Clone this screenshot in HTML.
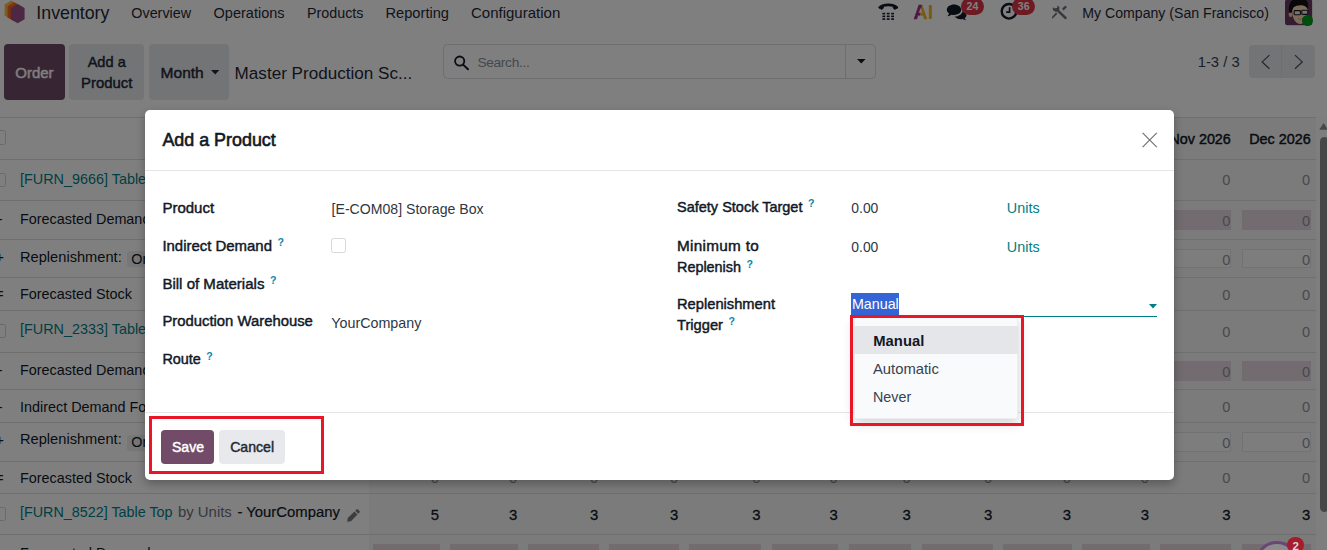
<!DOCTYPE html>
<html lang="en"><head><meta charset="utf-8"><title>Odoo - Master Production Schedule</title>
<style>
html,body{margin:0;padding:0;}
body{width:1327px;height:550px;overflow:hidden;background:#fff;font-family:"Liberation Sans", sans-serif;position:relative;}
.t{position:absolute;white-space:nowrap;line-height:1;}
.b{position:absolute;box-sizing:border-box;}
svg{position:absolute;overflow:visible;}
#app,#ov,#dlg,#fl{position:absolute;left:0;top:0;width:1327px;height:550px;overflow:hidden;}
#ov{background:rgba(0,0,0,.5);}
sup.q{color:#0b86ad;font-size:10.6px;font-weight:700;-webkit-text-stroke:0;position:relative;top:1.2px;margin-left:5.5px;vertical-align:super;line-height:0;}
</style></head><body>

<div id="app">
<svg style="left:0;top:0" width="30" height="26" viewBox="0 0 30 26">
<polygon points="11.2,0.6 17.9,4.4 17.9,15.6 11.2,19.4 4.6,15.6 4.6,4.4" fill="#fbb945"/>
<polygon points="14.2,2.2 21.2,6.2 21.2,17.4 14.2,21.3 7.6,17.4 7.6,6.2" fill="#f4661b"/>
<polygon points="17.6,4.0 24.6,8.0 24.6,19.2 17.6,23.2 10.8,19.2 10.8,8.0" fill="#985184"/>
</svg>
<div class="t" style="top:4.73px;font-size:17.8px;font-weight:400;color:#1f2937;left:36.30px;">Inventory</div>
<div class="t" style="top:5.75px;font-size:14.35px;font-weight:400;color:#1f2937;left:131.30px;">Overview</div>
<div class="t" style="top:5.63px;font-size:14.5px;font-weight:400;color:#1f2937;left:213.60px;">Operations</div>
<div class="t" style="top:5.80px;font-size:14.3px;font-weight:400;color:#1f2937;left:307.00px;">Products</div>
<div class="t" style="top:5.50px;font-size:14.65px;font-weight:400;color:#1f2937;left:385.50px;">Reporting</div>
<div class="t" style="top:5.20px;font-size:15.0px;font-weight:400;color:#1f2937;left:471.00px;">Configuration</div>
<svg style="left:876px;top:0" width="26" height="24" viewBox="876 0 26 24"><path d="M879.8 7.4 C883.5 3.9 893.1 3.9 896.8 7.4" fill="none" stroke="#111827" stroke-width="2.7" stroke-linecap="round"/><path d="M878.5 7.3 l3.2 2.7 l2.4 -2.2 l-1.8 -2.4z M898.1 7.3 l-3.2 2.7 l-2.4 -2.2 l1.8 -2.4z" fill="#111827"/><rect x="882.4" y="12.80" width="2.8" height="1.6" fill="#111827"/><rect x="882.4" y="15.55" width="2.8" height="1.6" fill="#111827"/><rect x="882.4" y="18.30" width="2.8" height="1.6" fill="#111827"/><rect x="886.8" y="12.80" width="2.8" height="1.6" fill="#111827"/><rect x="886.8" y="15.55" width="2.8" height="1.6" fill="#111827"/><rect x="886.8" y="18.30" width="2.8" height="1.6" fill="#111827"/><rect x="891.2" y="12.80" width="2.8" height="1.6" fill="#111827"/><rect x="891.2" y="15.55" width="2.8" height="1.6" fill="#111827"/><rect x="891.2" y="18.30" width="2.8" height="1.6" fill="#111827"/></svg>
<div class="t" style="left:913.4px;top:3.1px;font-size:19.4px;font-weight:700;"><span style="display:inline-block;transform:scaleX(1.0);transform-origin:left center;margin-right:0.4px;background:linear-gradient(100deg,#a02c8c 0%,#a02c8c 50%,#f5b02e 54%,#f5b02e 100%);-webkit-background-clip:text;background-clip:text;color:transparent;-webkit-text-stroke:0.5px rgba(160,44,140,.0);">A</span><span style="color:#f5b02e">I</span></div>
<svg style="left:944px;top:0" width="26" height="24" viewBox="944 0 26 24"><path d="M954 4.6c-4 0-7.2 2.3-7.2 5.2 0 1.5.9 2.8 2.3 3.8-.3 1-1 1.9-1.9 2.6 1.7-.1 3.2-.7 4.3-1.5.8.2 1.6.3 2.5.3 4 0 7.2-2.3 7.2-5.2S958 4.6 954 4.6z" fill="#111827"/><path d="M962.6 11.2c-.5 2.9-3.8 5.2-8 5.4 1.2 1.6 3.5 2.6 6 2.6.7 0 1.400-.1 2-.2 1 .7 2.300 1.200 3.700 1.300-.8-.6-1.300-1.400-1.600-2.200 1.100-.8 1.800-1.900 1.800-3.100 0-1.600-1.500-3.000-3.900-3.800z" fill="#111827"/></svg>
<div class="b" style="left:960.70px;top:-2.50px;width:23.60px;height:17.50px;background:#dc3545;border-radius:9px;"></div>
<div class="t" style="top:0.93px;font-size:10.6px;font-weight:700;color:#fff;left:772.50px;width:400px;text-align:center;">24</div>
<svg style="left:998px;top:0" width="24" height="24" viewBox="998 0 24 24"><circle cx="1009" cy="11.3" r="7.3" fill="none" stroke="#111827" stroke-width="2.4"/><path d="M1009.6 7.2v5h-3.400" fill="none" stroke="#111827" stroke-width="1.7"/></svg>
<div class="b" style="left:1012.00px;top:-2.50px;width:23.40px;height:17.50px;background:#dc3545;border-radius:9px;"></div>
<div class="t" style="top:0.93px;font-size:10.6px;font-weight:700;color:#fff;left:823.70px;width:400px;text-align:center;">36</div>
<svg style="left:1048px;top:0" width="24" height="24" viewBox="1048 0 24 24"><path d="M1056.2 9.2 L1065.6 18.0" stroke="#6d727a" stroke-width="2.4" stroke-linecap="round" fill="none"/><path d="M1053.0 7.2 a3.3 3.3 0 1 0 4.6 -1.8 l-0.4 2.6 l-2.2 0.5z" fill="#6d727a"/><path d="M1062.0 8.8 L1065.3 5.6 L1066.9 7.2 L1063.6 10.4z" fill="#6d727a"/><path d="M1057.4 13.8 L1052.2 18.9 L1052.0 16.9 L1056.0 12.5z" fill="#6d727a"/></svg>
<div class="t" style="top:6.35px;font-size:14.12px;font-weight:400;color:#1f2937;left:1082.30px;">My Company (San Francisco)</div>
<svg style="left:1285.2px;top:-1px" width="27.4" height="26.4" viewBox="0 0 27.4 26.4"><defs><clipPath id="avc"><rect x="0" y="0" width="27.4" height="26.4" rx="3.2"/></clipPath></defs><g clip-path="url(#avc)"><rect width="27.4" height="26.4" fill="#6b3a62"/><path d="M7.5 5 C6 18 9.5 24.500 15 25 C20 25 23.500 19 22.800 5z" fill="#fbd5b3"/><ellipse cx="5.6" cy="15.4" rx="1.9" ry="2.6" fill="#f0c29c"/><path d="M4.2 13.5 C2.5 5 6.500 -1 14 -1 C21 -1 24.500 2.500 22.900 10.500 C21.500 7.500 20 6.500 17 6.200 C13 6.000 10.500 7.000 8.600 8.200 C7.400 10 7.000 12 6.600 14z" fill="#111"/><rect x="9.2" y="11.6" width="6.2" height="4.2" rx="0.6" fill="#e8e8e8" stroke="#1a1a1a" stroke-width="1.1"/><rect x="16.8" y="11.2" width="6" height="4.2" rx="0.6" fill="#e8e8e8" stroke="#1a1a1a" stroke-width="1.1"/><path d="M13 19.300 q2.500 1.800 5.200 0.200" fill="#fff" stroke="#7a4a3a" stroke-width="0.5"/></g></svg>
<div class="b" style="left:1302.0px;top:15.0px;width:11.4px;height:11.4px;border-radius:50%;background:#009a1a;"></div>
<div class="b" style="left:4.00px;top:44.00px;width:61.00px;height:56.00px;background:#714B67;border-radius:4px;"></div>
<div class="t" style="top:65.10px;font-size:15.0px;font-weight:400;color:#fff;-webkit-text-stroke:0.45px #fff;left:-165.60px;width:400px;text-align:center;">Order</div>
<div class="b" style="left:69.00px;top:44.00px;width:75.00px;height:56.00px;background:#e7e9ed;border-radius:4px;"></div>
<div class="t" style="top:54.84px;font-size:14.6px;font-weight:400;color:#1f2937;-webkit-text-stroke:0.45px #1f2937;left:-93.30px;width:400px;text-align:center;">Add a</div>
<div class="t" style="top:76.29px;font-size:14.9px;font-weight:400;color:#1f2937;-webkit-text-stroke:0.45px #1f2937;left:-93.30px;width:400px;text-align:center;">Product</div>
<div class="b" style="left:149.00px;top:44.00px;width:79.60px;height:56.00px;background:#e7e9ed;border-radius:4px;"></div>
<div class="t" style="top:64.68px;font-size:15.5px;font-weight:400;color:#1f2937;-webkit-text-stroke:0.45px #1f2937;left:160.60px;">Month</div>
<svg style="left:210.5px;top:70.2px" width="8.4" height="4.6" viewBox="0 0 8.4 4.6"><path d="M0 0h8.4L4.200 4.600z" fill="#1f2937"/></svg>
<div class="t" style="top:65.22px;font-size:17.1px;font-weight:400;color:#1f2937;left:234.60px;">Master Production Sc...</div>
<div class="b" style="left:443.00px;top:44.00px;width:433.40px;height:35.00px;background:#fff;border:1px solid #d9dce1;border-radius:4.5px;"></div>
<div class="b" style="left:845.00px;top:45.00px;width:1.00px;height:33.00px;background:#d9dce1;"></div>
<svg style="left:452px;top:53px" width="20" height="20" viewBox="452 53 20 20"><circle cx="459.7" cy="61.1" r="4.6" fill="none" stroke="#111827" stroke-width="1.8"/><path d="M463.100 64.600L468 69.300" stroke="#111827" stroke-width="2.0" stroke-linecap="round"/></svg>
<div class="t" style="top:56.00px;font-size:13.7px;font-weight:400;color:#8790a0;letter-spacing:-0.3px;left:477.40px;">Search...</div>
<svg style="left:856.5px;top:58.9px" width="8.6" height="4.6" viewBox="0 0 8.6 4.6"><path d="M0 0h8.6L4.300 4.600z" fill="#111827"/></svg>
<div class="t" style="top:54.97px;font-size:14.8px;font-weight:400;color:#374151;right:87.40px;">1-3 / 3</div>
<div class="b" style="left:1249.00px;top:44.70px;width:65.60px;height:33.10px;background:#e7e9ed;border-radius:4px;"></div>
<div class="b" style="left:1281.20px;top:44.70px;width:1.00px;height:33.10px;background:#dcdfe4;"></div>
<svg style="left:1249px;top:44.700px" width="66" height="33" viewBox="1249 44.700 66 33"><path d="M1269.4 54.8L1262.2 61.600L1269.4 68.400" fill="none" stroke="#4b5563" stroke-width="1.3"/><path d="M1295.0 54.800L1302.2 61.600L1295.0 68.400" fill="none" stroke="#4b5563" stroke-width="1.300"/></svg>
<div class="b" style="left:368.70px;top:117.50px;width:947.30px;height:432.50px;background:#f7f7f7;"></div>
<div class="b" style="left:0.00px;top:117.00px;width:1316.00px;height:1.00px;background:#dedfe1;"></div>
<div class="b" style="left:-8.50px;top:130.40px;width:14.70px;height:14.20px;background:#fff;border:1px solid #cfd3d9;border-radius:2.5px;"></div>
<div class="t" style="top:132.15px;font-size:14.35px;font-weight:400;color:#111827;-webkit-text-stroke:0.45px #111827;right:887.80px;">Jan 2026</div>
<div class="t" style="top:132.15px;font-size:14.35px;font-weight:400;color:#111827;-webkit-text-stroke:0.45px #111827;right:809.50px;">Feb 2026</div>
<div class="t" style="top:132.15px;font-size:14.35px;font-weight:400;color:#111827;-webkit-text-stroke:0.45px #111827;right:728.40px;">Mar 2026</div>
<div class="t" style="top:132.15px;font-size:14.35px;font-weight:400;color:#111827;-webkit-text-stroke:0.45px #111827;right:648.40px;">Apr 2026</div>
<div class="t" style="top:132.15px;font-size:14.35px;font-weight:400;color:#111827;-webkit-text-stroke:0.45px #111827;right:566.30px;">May 2026</div>
<div class="t" style="top:132.15px;font-size:14.35px;font-weight:400;color:#111827;-webkit-text-stroke:0.45px #111827;right:489.00px;">Jun 2026</div>
<div class="t" style="top:132.15px;font-size:14.35px;font-weight:400;color:#111827;-webkit-text-stroke:0.45px #111827;right:416.10px;">Jul 2026</div>
<div class="t" style="top:132.15px;font-size:14.35px;font-weight:400;color:#111827;-webkit-text-stroke:0.45px #111827;right:334.40px;">Aug 2026</div>
<div class="t" style="top:132.15px;font-size:14.35px;font-weight:400;color:#111827;-webkit-text-stroke:0.45px #111827;right:255.70px;">Sep 2026</div>
<div class="t" style="top:132.15px;font-size:14.35px;font-weight:400;color:#111827;-webkit-text-stroke:0.45px #111827;right:177.70px;">Oct 2026</div>
<div class="t" style="top:132.15px;font-size:14.35px;font-weight:400;color:#111827;-webkit-text-stroke:0.45px #111827;right:96.20px;">Nov 2026</div>
<div class="t" style="top:132.15px;font-size:14.35px;font-weight:400;color:#111827;-webkit-text-stroke:0.45px #111827;right:16.40px;">Dec 2026</div>
<div class="b" style="left:0.00px;top:158.90px;width:1316.00px;height:1.00px;background:#dedfe1;"></div>
<div class="b" style="left:-8.50px;top:172.60px;width:14.70px;height:14.20px;background:#fff;border:1px solid #cfd3d9;border-radius:2.5px;"></div>
<div class="t" style="top:171.81px;font-size:14.4px;font-weight:400;color:#017e84;left:20.00px;">[FURN_9666] Table Leg by Units - YourCompany</div>
<div class="t" style="top:173.24px;font-size:14.6px;font-weight:400;color:#8d94a0;right:888.20px;">0</div>
<div class="t" style="top:173.24px;font-size:14.6px;font-weight:400;color:#8d94a0;right:809.90px;">0</div>
<div class="t" style="top:173.24px;font-size:14.6px;font-weight:400;color:#8d94a0;right:728.80px;">0</div>
<div class="t" style="top:173.24px;font-size:14.6px;font-weight:400;color:#8d94a0;right:648.80px;">0</div>
<div class="t" style="top:173.24px;font-size:14.6px;font-weight:400;color:#8d94a0;right:566.70px;">0</div>
<div class="t" style="top:173.24px;font-size:14.6px;font-weight:400;color:#8d94a0;right:489.40px;">0</div>
<div class="t" style="top:173.24px;font-size:14.6px;font-weight:400;color:#8d94a0;right:416.50px;">0</div>
<div class="t" style="top:173.24px;font-size:14.6px;font-weight:400;color:#8d94a0;right:334.80px;">0</div>
<div class="t" style="top:173.24px;font-size:14.6px;font-weight:400;color:#8d94a0;right:256.10px;">0</div>
<div class="t" style="top:173.24px;font-size:14.6px;font-weight:400;color:#8d94a0;right:178.10px;">0</div>
<div class="t" style="top:173.24px;font-size:14.6px;font-weight:400;color:#8d94a0;right:96.60px;">0</div>
<div class="t" style="top:173.24px;font-size:14.6px;font-weight:400;color:#8d94a0;right:16.80px;">0</div>
<div class="b" style="left:0.00px;top:199.70px;width:1316.00px;height:1.00px;background:#dedfe1;"></div>
<div class="t" style="top:212.01px;font-size:14.4px;font-weight:400;color:#111827;right:1324.40px;">-</div>
<div class="t" style="top:212.01px;font-size:14.4px;font-weight:400;color:#111827;left:20.00px;">Forecasted Demand</div>
<div class="b" style="left:373.40px;top:210.05px;width:66.20px;height:19.60px;background:#e4d8e0;"></div>
<div class="t" style="top:214.24px;font-size:14.6px;font-weight:400;color:#8d94a0;right:888.20px;">0</div>
<div class="b" style="left:449.70px;top:210.05px;width:68.20px;height:19.60px;background:#e4d8e0;"></div>
<div class="t" style="top:214.24px;font-size:14.6px;font-weight:400;color:#8d94a0;right:809.90px;">0</div>
<div class="b" style="left:528.40px;top:210.05px;width:70.60px;height:19.60px;background:#e4d8e0;"></div>
<div class="t" style="top:214.24px;font-size:14.6px;font-weight:400;color:#8d94a0;right:728.80px;">0</div>
<div class="b" style="left:608.70px;top:210.05px;width:70.30px;height:19.60px;background:#e4d8e0;"></div>
<div class="t" style="top:214.24px;font-size:14.6px;font-weight:400;color:#8d94a0;right:648.80px;">0</div>
<div class="b" style="left:688.80px;top:210.05px;width:72.30px;height:19.60px;background:#e4d8e0;"></div>
<div class="t" style="top:214.24px;font-size:14.6px;font-weight:400;color:#8d94a0;right:566.70px;">0</div>
<div class="b" style="left:771.90px;top:210.05px;width:66.50px;height:19.60px;background:#e4d8e0;"></div>
<div class="t" style="top:214.24px;font-size:14.6px;font-weight:400;color:#8d94a0;right:489.40px;">0</div>
<div class="b" style="left:848.80px;top:210.05px;width:62.50px;height:19.60px;background:#e4d8e0;"></div>
<div class="t" style="top:214.24px;font-size:14.6px;font-weight:400;color:#8d94a0;right:416.50px;">0</div>
<div class="b" style="left:922.00px;top:210.05px;width:71.00px;height:19.60px;background:#e4d8e0;"></div>
<div class="t" style="top:214.24px;font-size:14.6px;font-weight:400;color:#8d94a0;right:334.80px;">0</div>
<div class="b" style="left:1002.80px;top:210.05px;width:68.90px;height:19.60px;background:#e4d8e0;"></div>
<div class="t" style="top:214.24px;font-size:14.6px;font-weight:400;color:#8d94a0;right:256.10px;">0</div>
<div class="b" style="left:1082.00px;top:210.05px;width:67.70px;height:19.60px;background:#e4d8e0;"></div>
<div class="t" style="top:214.24px;font-size:14.6px;font-weight:400;color:#8d94a0;right:178.10px;">0</div>
<div class="b" style="left:1160.00px;top:210.05px;width:71.20px;height:19.60px;background:#e4d8e0;"></div>
<div class="t" style="top:214.24px;font-size:14.6px;font-weight:400;color:#8d94a0;right:96.60px;">0</div>
<div class="b" style="left:1241.80px;top:210.05px;width:69.20px;height:19.60px;background:#e4d8e0;"></div>
<div class="t" style="top:214.24px;font-size:14.6px;font-weight:400;color:#8d94a0;right:16.80px;">0</div>
<div class="b" style="left:0.00px;top:239.00px;width:1316.00px;height:1.00px;background:#dedfe1;"></div>
<div class="t" style="top:250.21px;font-size:14.4px;font-weight:400;color:#111827;right:1323.20px;">+</div>
<div class="t" style="top:250.00px;font-size:14.65px;font-weight:400;color:#111827;left:20.00px;">Replenishment:</div>
<div class="b" style="left:126.60px;top:250.95px;width:49.40px;height:16.50px;background:#eceef1;border-radius:3px;"></div>
<div class="t" style="top:252.21px;font-size:14.4px;font-weight:400;color:#111827;left:131.20px;">Order</div>
<div class="b" style="left:373.40px;top:248.65px;width:66.20px;height:19.60px;background:#fafbfb;border:1px solid #e3e5e9;"></div>
<div class="t" style="top:252.84px;font-size:14.6px;font-weight:400;color:#8d94a0;right:888.20px;">0</div>
<div class="b" style="left:449.70px;top:248.65px;width:68.20px;height:19.60px;background:#fafbfb;border:1px solid #e3e5e9;"></div>
<div class="t" style="top:252.84px;font-size:14.6px;font-weight:400;color:#8d94a0;right:809.90px;">0</div>
<div class="b" style="left:528.40px;top:248.65px;width:70.60px;height:19.60px;background:#fafbfb;border:1px solid #e3e5e9;"></div>
<div class="t" style="top:252.84px;font-size:14.6px;font-weight:400;color:#8d94a0;right:728.80px;">0</div>
<div class="b" style="left:608.70px;top:248.65px;width:70.30px;height:19.60px;background:#fafbfb;border:1px solid #e3e5e9;"></div>
<div class="t" style="top:252.84px;font-size:14.6px;font-weight:400;color:#8d94a0;right:648.80px;">0</div>
<div class="b" style="left:688.80px;top:248.65px;width:72.30px;height:19.60px;background:#fafbfb;border:1px solid #e3e5e9;"></div>
<div class="t" style="top:252.84px;font-size:14.6px;font-weight:400;color:#8d94a0;right:566.70px;">0</div>
<div class="b" style="left:771.90px;top:248.65px;width:66.50px;height:19.60px;background:#fafbfb;border:1px solid #e3e5e9;"></div>
<div class="t" style="top:252.84px;font-size:14.6px;font-weight:400;color:#8d94a0;right:489.40px;">0</div>
<div class="b" style="left:848.80px;top:248.65px;width:62.50px;height:19.60px;background:#fafbfb;border:1px solid #e3e5e9;"></div>
<div class="t" style="top:252.84px;font-size:14.6px;font-weight:400;color:#8d94a0;right:416.50px;">0</div>
<div class="b" style="left:922.00px;top:248.65px;width:71.00px;height:19.60px;background:#fafbfb;border:1px solid #e3e5e9;"></div>
<div class="t" style="top:252.84px;font-size:14.6px;font-weight:400;color:#8d94a0;right:334.80px;">0</div>
<div class="b" style="left:1002.80px;top:248.65px;width:68.90px;height:19.60px;background:#fafbfb;border:1px solid #e3e5e9;"></div>
<div class="t" style="top:252.84px;font-size:14.6px;font-weight:400;color:#8d94a0;right:256.10px;">0</div>
<div class="b" style="left:1082.00px;top:248.65px;width:67.70px;height:19.60px;background:#fafbfb;border:1px solid #e3e5e9;"></div>
<div class="t" style="top:252.84px;font-size:14.6px;font-weight:400;color:#8d94a0;right:178.10px;">0</div>
<div class="b" style="left:1160.00px;top:248.65px;width:71.20px;height:19.60px;background:#fafbfb;border:1px solid #e3e5e9;"></div>
<div class="t" style="top:252.84px;font-size:14.6px;font-weight:400;color:#8d94a0;right:96.60px;">0</div>
<div class="b" style="left:1241.80px;top:248.65px;width:69.20px;height:19.60px;background:#fafbfb;border:1px solid #e3e5e9;"></div>
<div class="t" style="top:252.84px;font-size:14.6px;font-weight:400;color:#8d94a0;right:16.80px;">0</div>
<div class="b" style="left:0.00px;top:276.90px;width:1316.00px;height:1.00px;background:#dedfe1;"></div>
<div class="t" style="top:286.81px;font-size:14.4px;font-weight:400;color:#111827;right:1323.40px;">=</div>
<div class="t" style="top:286.81px;font-size:14.4px;font-weight:400;color:#111827;left:20.00px;">Forecasted Stock</div>
<div class="t" style="top:287.84px;font-size:14.6px;font-weight:400;color:#8d94a0;right:888.20px;">0</div>
<div class="t" style="top:287.84px;font-size:14.6px;font-weight:400;color:#8d94a0;right:809.90px;">0</div>
<div class="t" style="top:287.84px;font-size:14.6px;font-weight:400;color:#8d94a0;right:728.80px;">0</div>
<div class="t" style="top:287.84px;font-size:14.6px;font-weight:400;color:#8d94a0;right:648.80px;">0</div>
<div class="t" style="top:287.84px;font-size:14.6px;font-weight:400;color:#8d94a0;right:566.70px;">0</div>
<div class="t" style="top:287.84px;font-size:14.6px;font-weight:400;color:#8d94a0;right:489.40px;">0</div>
<div class="t" style="top:287.84px;font-size:14.6px;font-weight:400;color:#8d94a0;right:416.50px;">0</div>
<div class="t" style="top:287.84px;font-size:14.6px;font-weight:400;color:#8d94a0;right:334.80px;">0</div>
<div class="t" style="top:287.84px;font-size:14.6px;font-weight:400;color:#8d94a0;right:256.10px;">0</div>
<div class="t" style="top:287.84px;font-size:14.6px;font-weight:400;color:#8d94a0;right:178.10px;">0</div>
<div class="t" style="top:287.84px;font-size:14.6px;font-weight:400;color:#8d94a0;right:96.60px;">0</div>
<div class="t" style="top:287.84px;font-size:14.6px;font-weight:400;color:#8d94a0;right:16.80px;">0</div>
<div class="b" style="left:0.00px;top:309.80px;width:1316.00px;height:1.00px;background:#dedfe1;"></div>
<div class="b" style="left:-8.50px;top:324.00px;width:14.70px;height:14.20px;background:#fff;border:1px solid #cfd3d9;border-radius:2.5px;"></div>
<div class="t" style="top:322.01px;font-size:14.4px;font-weight:400;color:#017e84;left:20.00px;">[FURN_2333] Table Kit by Units - YourCompany</div>
<div class="t" style="top:324.54px;font-size:14.6px;font-weight:400;color:#8d94a0;right:888.20px;">0</div>
<div class="t" style="top:324.54px;font-size:14.6px;font-weight:400;color:#8d94a0;right:809.90px;">0</div>
<div class="t" style="top:324.54px;font-size:14.6px;font-weight:400;color:#8d94a0;right:728.80px;">0</div>
<div class="t" style="top:324.54px;font-size:14.6px;font-weight:400;color:#8d94a0;right:648.80px;">0</div>
<div class="t" style="top:324.54px;font-size:14.6px;font-weight:400;color:#8d94a0;right:566.70px;">0</div>
<div class="t" style="top:324.54px;font-size:14.6px;font-weight:400;color:#8d94a0;right:489.40px;">0</div>
<div class="t" style="top:324.54px;font-size:14.6px;font-weight:400;color:#8d94a0;right:416.50px;">0</div>
<div class="t" style="top:324.54px;font-size:14.6px;font-weight:400;color:#8d94a0;right:334.80px;">0</div>
<div class="t" style="top:324.54px;font-size:14.6px;font-weight:400;color:#8d94a0;right:256.10px;">0</div>
<div class="t" style="top:324.54px;font-size:14.6px;font-weight:400;color:#8d94a0;right:178.10px;">0</div>
<div class="t" style="top:324.54px;font-size:14.6px;font-weight:400;color:#8d94a0;right:96.60px;">0</div>
<div class="t" style="top:324.54px;font-size:14.6px;font-weight:400;color:#8d94a0;right:16.80px;">0</div>
<div class="b" style="left:0.00px;top:351.60px;width:1316.00px;height:1.00px;background:#dedfe1;"></div>
<div class="t" style="top:362.71px;font-size:14.4px;font-weight:400;color:#111827;right:1324.40px;">-</div>
<div class="t" style="top:362.71px;font-size:14.4px;font-weight:400;color:#111827;left:20.00px;">Forecasted Demand</div>
<div class="b" style="left:373.40px;top:361.20px;width:66.20px;height:19.60px;background:#e4d8e0;"></div>
<div class="t" style="top:365.14px;font-size:14.6px;font-weight:400;color:#8d94a0;right:888.20px;">0</div>
<div class="b" style="left:449.70px;top:361.20px;width:68.20px;height:19.60px;background:#e4d8e0;"></div>
<div class="t" style="top:365.14px;font-size:14.6px;font-weight:400;color:#8d94a0;right:809.90px;">0</div>
<div class="b" style="left:528.40px;top:361.20px;width:70.60px;height:19.60px;background:#e4d8e0;"></div>
<div class="t" style="top:365.14px;font-size:14.6px;font-weight:400;color:#8d94a0;right:728.80px;">0</div>
<div class="b" style="left:608.70px;top:361.20px;width:70.30px;height:19.60px;background:#e4d8e0;"></div>
<div class="t" style="top:365.14px;font-size:14.6px;font-weight:400;color:#8d94a0;right:648.80px;">0</div>
<div class="b" style="left:688.80px;top:361.20px;width:72.30px;height:19.60px;background:#e4d8e0;"></div>
<div class="t" style="top:365.14px;font-size:14.6px;font-weight:400;color:#8d94a0;right:566.70px;">0</div>
<div class="b" style="left:771.90px;top:361.20px;width:66.50px;height:19.60px;background:#e4d8e0;"></div>
<div class="t" style="top:365.14px;font-size:14.6px;font-weight:400;color:#8d94a0;right:489.40px;">0</div>
<div class="b" style="left:848.80px;top:361.20px;width:62.50px;height:19.60px;background:#e4d8e0;"></div>
<div class="t" style="top:365.14px;font-size:14.6px;font-weight:400;color:#8d94a0;right:416.50px;">0</div>
<div class="b" style="left:922.00px;top:361.20px;width:71.00px;height:19.60px;background:#e4d8e0;"></div>
<div class="t" style="top:365.14px;font-size:14.6px;font-weight:400;color:#8d94a0;right:334.80px;">0</div>
<div class="b" style="left:1002.80px;top:361.20px;width:68.90px;height:19.60px;background:#e4d8e0;"></div>
<div class="t" style="top:365.14px;font-size:14.6px;font-weight:400;color:#8d94a0;right:256.10px;">0</div>
<div class="b" style="left:1082.00px;top:361.20px;width:67.70px;height:19.60px;background:#e4d8e0;"></div>
<div class="t" style="top:365.14px;font-size:14.6px;font-weight:400;color:#8d94a0;right:178.10px;">0</div>
<div class="b" style="left:1160.00px;top:361.20px;width:71.20px;height:19.60px;background:#e4d8e0;"></div>
<div class="t" style="top:365.14px;font-size:14.6px;font-weight:400;color:#8d94a0;right:96.60px;">0</div>
<div class="b" style="left:1241.80px;top:361.20px;width:69.20px;height:19.60px;background:#e4d8e0;"></div>
<div class="t" style="top:365.14px;font-size:14.6px;font-weight:400;color:#8d94a0;right:16.80px;">0</div>
<div class="b" style="left:0.00px;top:389.40px;width:1316.00px;height:1.00px;background:#dedfe1;"></div>
<div class="t" style="top:400.11px;font-size:14.4px;font-weight:400;color:#111827;right:1324.40px;">-</div>
<div class="t" style="top:400.11px;font-size:14.4px;font-weight:400;color:#111827;left:20.00px;">Indirect Demand Forecast</div>
<div class="t" style="top:399.84px;font-size:14.6px;font-weight:400;color:#8d94a0;right:888.20px;">0</div>
<div class="t" style="top:399.84px;font-size:14.6px;font-weight:400;color:#8d94a0;right:809.90px;">0</div>
<div class="t" style="top:399.84px;font-size:14.6px;font-weight:400;color:#8d94a0;right:728.80px;">0</div>
<div class="t" style="top:399.84px;font-size:14.6px;font-weight:400;color:#8d94a0;right:648.80px;">0</div>
<div class="t" style="top:399.84px;font-size:14.6px;font-weight:400;color:#8d94a0;right:566.70px;">0</div>
<div class="t" style="top:399.84px;font-size:14.6px;font-weight:400;color:#8d94a0;right:489.40px;">0</div>
<div class="t" style="top:399.84px;font-size:14.6px;font-weight:400;color:#8d94a0;right:416.50px;">0</div>
<div class="t" style="top:399.84px;font-size:14.6px;font-weight:400;color:#8d94a0;right:334.80px;">0</div>
<div class="t" style="top:399.84px;font-size:14.6px;font-weight:400;color:#8d94a0;right:256.10px;">0</div>
<div class="t" style="top:399.84px;font-size:14.6px;font-weight:400;color:#8d94a0;right:178.10px;">0</div>
<div class="t" style="top:399.84px;font-size:14.6px;font-weight:400;color:#8d94a0;right:96.60px;">0</div>
<div class="t" style="top:399.84px;font-size:14.6px;font-weight:400;color:#8d94a0;right:16.80px;">0</div>
<div class="b" style="left:0.00px;top:422.30px;width:1316.00px;height:1.00px;background:#dedfe1;"></div>
<div class="t" style="top:432.51px;font-size:14.4px;font-weight:400;color:#111827;right:1323.20px;">+</div>
<div class="t" style="top:432.30px;font-size:14.65px;font-weight:400;color:#111827;left:20.00px;">Replenishment:</div>
<div class="b" style="left:126.60px;top:434.65px;width:49.40px;height:16.50px;background:#eceef1;border-radius:3px;"></div>
<div class="t" style="top:434.51px;font-size:14.4px;font-weight:400;color:#111827;left:131.20px;">Order</div>
<div class="b" style="left:373.40px;top:432.35px;width:66.20px;height:19.60px;background:#fafbfb;border:1px solid #e3e5e9;"></div>
<div class="t" style="top:436.34px;font-size:14.6px;font-weight:400;color:#8d94a0;right:888.20px;">0</div>
<div class="b" style="left:449.70px;top:432.35px;width:68.20px;height:19.60px;background:#fafbfb;border:1px solid #e3e5e9;"></div>
<div class="t" style="top:436.34px;font-size:14.6px;font-weight:400;color:#8d94a0;right:809.90px;">0</div>
<div class="b" style="left:528.40px;top:432.35px;width:70.60px;height:19.60px;background:#fafbfb;border:1px solid #e3e5e9;"></div>
<div class="t" style="top:436.34px;font-size:14.6px;font-weight:400;color:#8d94a0;right:728.80px;">0</div>
<div class="b" style="left:608.70px;top:432.35px;width:70.30px;height:19.60px;background:#fafbfb;border:1px solid #e3e5e9;"></div>
<div class="t" style="top:436.34px;font-size:14.6px;font-weight:400;color:#8d94a0;right:648.80px;">0</div>
<div class="b" style="left:688.80px;top:432.35px;width:72.30px;height:19.60px;background:#fafbfb;border:1px solid #e3e5e9;"></div>
<div class="t" style="top:436.34px;font-size:14.6px;font-weight:400;color:#8d94a0;right:566.70px;">0</div>
<div class="b" style="left:771.90px;top:432.35px;width:66.50px;height:19.60px;background:#fafbfb;border:1px solid #e3e5e9;"></div>
<div class="t" style="top:436.34px;font-size:14.6px;font-weight:400;color:#8d94a0;right:489.40px;">0</div>
<div class="b" style="left:848.80px;top:432.35px;width:62.50px;height:19.60px;background:#fafbfb;border:1px solid #e3e5e9;"></div>
<div class="t" style="top:436.34px;font-size:14.6px;font-weight:400;color:#8d94a0;right:416.50px;">0</div>
<div class="b" style="left:922.00px;top:432.35px;width:71.00px;height:19.60px;background:#fafbfb;border:1px solid #e3e5e9;"></div>
<div class="t" style="top:436.34px;font-size:14.6px;font-weight:400;color:#8d94a0;right:334.80px;">0</div>
<div class="b" style="left:1002.80px;top:432.35px;width:68.90px;height:19.60px;background:#fafbfb;border:1px solid #e3e5e9;"></div>
<div class="t" style="top:436.34px;font-size:14.6px;font-weight:400;color:#8d94a0;right:256.10px;">0</div>
<div class="b" style="left:1082.00px;top:432.35px;width:67.70px;height:19.60px;background:#fafbfb;border:1px solid #e3e5e9;"></div>
<div class="t" style="top:436.34px;font-size:14.6px;font-weight:400;color:#8d94a0;right:178.10px;">0</div>
<div class="b" style="left:1160.00px;top:432.35px;width:71.20px;height:19.60px;background:#fafbfb;border:1px solid #e3e5e9;"></div>
<div class="t" style="top:436.34px;font-size:14.6px;font-weight:400;color:#8d94a0;right:96.60px;">0</div>
<div class="b" style="left:1241.80px;top:432.35px;width:69.20px;height:19.60px;background:#fafbfb;border:1px solid #e3e5e9;"></div>
<div class="t" style="top:436.34px;font-size:14.6px;font-weight:400;color:#8d94a0;right:16.80px;">0</div>
<div class="b" style="left:0.00px;top:461.00px;width:1316.00px;height:1.00px;background:#dedfe1;"></div>
<div class="t" style="top:470.61px;font-size:14.4px;font-weight:400;color:#111827;right:1323.40px;">=</div>
<div class="t" style="top:470.61px;font-size:14.4px;font-weight:400;color:#111827;left:20.00px;">Forecasted Stock</div>
<div class="t" style="top:471.04px;font-size:14.6px;font-weight:400;color:#8d94a0;right:888.20px;">0</div>
<div class="t" style="top:471.04px;font-size:14.6px;font-weight:400;color:#8d94a0;right:809.90px;">0</div>
<div class="t" style="top:471.04px;font-size:14.6px;font-weight:400;color:#8d94a0;right:728.80px;">0</div>
<div class="t" style="top:471.04px;font-size:14.6px;font-weight:400;color:#8d94a0;right:648.80px;">0</div>
<div class="t" style="top:471.04px;font-size:14.6px;font-weight:400;color:#8d94a0;right:566.70px;">0</div>
<div class="t" style="top:471.04px;font-size:14.6px;font-weight:400;color:#8d94a0;right:489.40px;">0</div>
<div class="t" style="top:471.04px;font-size:14.6px;font-weight:400;color:#8d94a0;right:416.50px;">0</div>
<div class="t" style="top:471.04px;font-size:14.6px;font-weight:400;color:#8d94a0;right:334.80px;">0</div>
<div class="t" style="top:471.04px;font-size:14.6px;font-weight:400;color:#8d94a0;right:256.10px;">0</div>
<div class="t" style="top:471.04px;font-size:14.6px;font-weight:400;color:#8d94a0;right:178.10px;">0</div>
<div class="t" style="top:471.04px;font-size:14.6px;font-weight:400;color:#8d94a0;right:96.60px;">0</div>
<div class="t" style="top:471.04px;font-size:14.6px;font-weight:400;color:#8d94a0;right:16.80px;">0</div>
<div class="b" style="left:0.00px;top:492.80px;width:1316.00px;height:1.00px;background:#dedfe1;"></div>
<div class="b" style="left:-8.50px;top:506.60px;width:14.70px;height:14.20px;background:#fff;border:1px solid #cfd3d9;border-radius:2.5px;"></div>
<div class="t" style="top:505.45px;font-size:14.35px;font-weight:400;color:#017e84;left:20.00px;">[FURN_8522] Table Top</div>
<div class="t" style="top:504.99px;font-size:14.9px;font-weight:400;color:#6b7280;left:178.00px;">by Units</div>
<div class="t" style="top:505.03px;font-size:14.85px;font-weight:400;color:#111827;left:237.50px;-webkit-text-stroke:0.2px #111827;">- YourCompany</div>
<svg style="left:347.4px;top:508.9px" width="13" height="13" viewBox="0 0 13 13"><path d="M0.200 12.800l0.600-3.700 6.600-6.600 3.100 3.100-6.600 6.600zM8.200 1.700l1.200-1.200c.5-.5 1.200-.5 1.700 0l1.400 1.400c.5.500.5 1.200 0 1.700l-1.200 1.200z" fill="#767a82"/></svg>
<div class="t" style="top:507.69px;font-size:14.9px;font-weight:400;color:#111827;-webkit-text-stroke:0.28px #111827;right:888.00px;">5</div>
<div class="t" style="top:507.69px;font-size:14.9px;font-weight:400;color:#111827;-webkit-text-stroke:0.28px #111827;right:809.70px;">3</div>
<div class="t" style="top:507.69px;font-size:14.9px;font-weight:400;color:#111827;-webkit-text-stroke:0.28px #111827;right:728.60px;">3</div>
<div class="t" style="top:507.69px;font-size:14.9px;font-weight:400;color:#111827;-webkit-text-stroke:0.28px #111827;right:648.60px;">3</div>
<div class="t" style="top:507.69px;font-size:14.9px;font-weight:400;color:#111827;-webkit-text-stroke:0.28px #111827;right:566.50px;">3</div>
<div class="t" style="top:507.69px;font-size:14.9px;font-weight:400;color:#111827;-webkit-text-stroke:0.28px #111827;right:489.20px;">3</div>
<div class="t" style="top:507.69px;font-size:14.9px;font-weight:400;color:#111827;-webkit-text-stroke:0.28px #111827;right:416.30px;">3</div>
<div class="t" style="top:507.69px;font-size:14.9px;font-weight:400;color:#111827;-webkit-text-stroke:0.28px #111827;right:334.60px;">3</div>
<div class="t" style="top:507.69px;font-size:14.9px;font-weight:400;color:#111827;-webkit-text-stroke:0.28px #111827;right:255.90px;">3</div>
<div class="t" style="top:507.69px;font-size:14.9px;font-weight:400;color:#111827;-webkit-text-stroke:0.28px #111827;right:177.90px;">3</div>
<div class="t" style="top:507.69px;font-size:14.9px;font-weight:400;color:#111827;-webkit-text-stroke:0.28px #111827;right:96.40px;">3</div>
<div class="t" style="top:507.69px;font-size:14.9px;font-weight:400;color:#111827;-webkit-text-stroke:0.28px #111827;right:16.60px;">3</div>
<div class="b" style="left:0.00px;top:533.80px;width:1316.00px;height:1.00px;background:#dedfe1;"></div>
<div class="t" style="top:545.81px;font-size:14.4px;font-weight:400;color:#111827;right:1324.40px;">-</div>
<div class="t" style="top:545.81px;font-size:14.4px;font-weight:400;color:#111827;left:20.00px;">Forecasted Demand</div>
<div class="b" style="left:373.40px;top:544.10px;width:66.20px;height:19.60px;background:#e4d8e0;"></div>
<div class="t" style="top:548.14px;font-size:14.6px;font-weight:400;color:#8d94a0;right:888.20px;">0</div>
<div class="b" style="left:449.70px;top:544.10px;width:68.20px;height:19.60px;background:#e4d8e0;"></div>
<div class="t" style="top:548.14px;font-size:14.6px;font-weight:400;color:#8d94a0;right:809.90px;">0</div>
<div class="b" style="left:528.40px;top:544.10px;width:70.60px;height:19.60px;background:#e4d8e0;"></div>
<div class="t" style="top:548.14px;font-size:14.6px;font-weight:400;color:#8d94a0;right:728.80px;">0</div>
<div class="b" style="left:608.70px;top:544.10px;width:70.30px;height:19.60px;background:#e4d8e0;"></div>
<div class="t" style="top:548.14px;font-size:14.6px;font-weight:400;color:#8d94a0;right:648.80px;">0</div>
<div class="b" style="left:688.80px;top:544.10px;width:72.30px;height:19.60px;background:#e4d8e0;"></div>
<div class="t" style="top:548.14px;font-size:14.6px;font-weight:400;color:#8d94a0;right:566.70px;">0</div>
<div class="b" style="left:771.90px;top:544.10px;width:66.50px;height:19.60px;background:#e4d8e0;"></div>
<div class="t" style="top:548.14px;font-size:14.6px;font-weight:400;color:#8d94a0;right:489.40px;">0</div>
<div class="b" style="left:848.80px;top:544.10px;width:62.50px;height:19.60px;background:#e4d8e0;"></div>
<div class="t" style="top:548.14px;font-size:14.6px;font-weight:400;color:#8d94a0;right:416.50px;">0</div>
<div class="b" style="left:922.00px;top:544.10px;width:71.00px;height:19.60px;background:#e4d8e0;"></div>
<div class="t" style="top:548.14px;font-size:14.6px;font-weight:400;color:#8d94a0;right:334.80px;">0</div>
<div class="b" style="left:1002.80px;top:544.10px;width:68.90px;height:19.60px;background:#e4d8e0;"></div>
<div class="t" style="top:548.14px;font-size:14.6px;font-weight:400;color:#8d94a0;right:256.10px;">0</div>
<div class="b" style="left:1082.00px;top:544.10px;width:67.70px;height:19.60px;background:#e4d8e0;"></div>
<div class="t" style="top:548.14px;font-size:14.6px;font-weight:400;color:#8d94a0;right:178.10px;">0</div>
<div class="b" style="left:1160.00px;top:544.10px;width:71.20px;height:19.60px;background:#e4d8e0;"></div>
<div class="t" style="top:548.14px;font-size:14.6px;font-weight:400;color:#8d94a0;right:96.60px;">0</div>
<div class="b" style="left:1241.80px;top:544.10px;width:69.20px;height:19.60px;background:#e4d8e0;"></div>
<div class="t" style="top:548.14px;font-size:14.6px;font-weight:400;color:#8d94a0;right:16.80px;">0</div>
<div class="b" style="left:1317.00px;top:117.50px;width:10.00px;height:432.50px;background:#fdfdfd;"></div>
<svg style="left:1319.6px;top:121.500px" width="8" height="7" viewBox="0 0 8 7"><path d="M-0.800 7.700L3.600 1.000L8.000 7.700z" fill="#8e8e8e"/></svg>
<div class="b" style="left:1319.50px;top:136.60px;width:9.00px;height:375.40px;background:#8e8e8e;border-radius:4.5px;"></div>
</div>
<div id="ov"></div>
<div id="fl">
<div class="b" style="left:1255px;top:541px;width:44px;height:44px;border-radius:50%;border:3px solid #6a4578;background:#8c8c8c;"></div>
<div class="b" style="left:1287.4px;top:536.7px;width:16.6px;height:16.6px;border-radius:50%;background:#a51c2d;"></div>
<div class="t" style="top:541.47px;font-size:11.5px;font-weight:700;color:#d8d8d8;left:1095.70px;width:400px;text-align:center;">2</div>
</div>
<div id="dlg">
<div class="b" style="left:145.00px;top:110.00px;width:1029.00px;height:370.00px;background:#fff;border-radius:5px;box-shadow:0 4px 10px rgba(0,0,0,.28);"></div>
<div class="t" style="top:132.05px;font-size:17.9px;font-weight:400;color:#111827;-webkit-text-stroke:0.6px #111827;left:162.40px;">Add a Product</div>
<svg style="left:1141px;top:131px" width="18" height="18" viewBox="0 0 18 18"><path d="M1.600 1.900L15.800 16.100M15.800 1.900L1.600 16.100" stroke="#707378" stroke-width="1.200" fill="none"/></svg>
<div class="b" style="left:145.00px;top:169.80px;width:1029.00px;height:1.00px;background:#e3e5e8;"></div>
<div class="b" style="left:145.00px;top:411.90px;width:1029.00px;height:1.00px;background:#e3e5e8;"></div>
<div class="t" style="top:199.90px;font-size:15.0px;font-weight:400;color:#111827;-webkit-text-stroke:0.45px #111827;left:162.40px;">Product</div>
<div class="t" style="top:202.06px;font-size:14.1px;font-weight:400;color:#2f3744;left:331.60px;">[E-COM08] Storage Box</div>
<div class="t" style="top:238.74px;font-size:14.95px;font-weight:400;color:#111827;-webkit-text-stroke:0.45px #111827;left:162.40px;">Indirect Demand<sup class="q">?</sup></div>
<div class="b" style="left:330.50px;top:238.00px;width:15.10px;height:15.10px;background:#fff;border:1px solid #d5d8dc;border-radius:2.5px;"></div>
<div class="t" style="top:276.06px;font-size:15.05px;font-weight:400;color:#111827;-webkit-text-stroke:0.45px #111827;left:162.40px;">Bill of Materials<sup class="q">?</sup></div>
<div class="t" style="top:314.03px;font-size:14.85px;font-weight:400;color:#111827;-webkit-text-stroke:0.45px #111827;left:162.40px;">Production Warehouse</div>
<div class="t" style="top:315.50px;font-size:14.3px;font-weight:400;color:#2f3744;left:331.30px;">YourCompany</div>
<div class="t" style="top:352.31px;font-size:14.4px;font-weight:400;color:#111827;-webkit-text-stroke:0.45px #111827;left:162.40px;">Route<sup class="q">?</sup></div>
<div class="t" style="top:200.13px;font-size:14.5px;font-weight:400;color:#111827;-webkit-text-stroke:0.45px #111827;left:677.00px;">Safety Stock Target<sup class="q">?</sup></div>
<div class="t" style="top:202.43px;font-size:13.9px;font-weight:400;color:#2f3744;left:851.30px;">0.00</div>
<div class="t" style="top:201.41px;font-size:14.4px;font-weight:400;color:#017e84;left:1006.80px;">Units</div>
<div class="t" style="top:238.05px;font-size:15.3px;font-weight:400;color:#111827;-webkit-text-stroke:0.45px #111827;letter-spacing:0.3px;left:677.00px;">Minimum to</div>
<div class="t" style="top:260.41px;font-size:14.4px;font-weight:400;color:#111827;-webkit-text-stroke:0.45px #111827;left:677.00px;">Replenish<sup class="q">?</sup></div>
<div class="t" style="top:241.23px;font-size:13.9px;font-weight:400;color:#2f3744;left:851.30px;">0.00</div>
<div class="t" style="top:240.01px;font-size:14.4px;font-weight:400;color:#017e84;left:1006.80px;">Units</div>
<div class="t" style="top:296.56px;font-size:14.7px;font-weight:400;color:#111827;-webkit-text-stroke:0.45px #111827;left:677.00px;">Replenishment</div>
<div class="t" style="top:318.16px;font-size:14.7px;font-weight:400;color:#111827;-webkit-text-stroke:0.45px #111827;left:677.00px;">Trigger<sup class="q">?</sup></div>
<div class="b" style="left:851.30px;top:293.00px;width:47.90px;height:21.90px;background:#3465d6;"></div>
<div class="t" style="top:297.40px;font-size:14.3px;font-weight:400;color:#fff;left:851.90px;">Manual</div>
<div class="b" style="left:851.20px;top:315.90px;width:305.60px;height:1.00px;background:#017e84;"></div>
<svg style="left:1148.6px;top:304.300px" width="8" height="4.5" viewBox="0 0 8 4.5"><path d="M0 0h8L4 4.500z" fill="#017e84"/></svg>
<div class="b" style="left:853.60px;top:317.20px;width:164.60px;height:102.20px;background:#f9fafb;border-radius:3px;box-shadow:0 4px 12px rgba(0,0,0,.18);border:1px solid #eceef0;"></div>
<div class="b" style="left:854.00px;top:326.00px;width:163.80px;height:28.00px;background:#e5e6e9;"></div>
<div class="t" style="top:334.27px;font-size:14.8px;font-weight:700;color:#111827;left:873.30px;">Manual</div>
<div class="t" style="top:361.57px;font-size:14.8px;font-weight:400;color:#374151;left:873.00px;">Automatic</div>
<div class="t" style="top:390.40px;font-size:14.3px;font-weight:400;color:#374151;left:873.00px;">Never</div>
<div class="b" style="left:850.30px;top:315.00px;width:173.70px;height:111.00px;border:3px solid #e81626;"></div>
<div class="b" style="left:149.00px;top:416.00px;width:175.00px;height:58.00px;border:3px solid #e81626;"></div>
<div class="b" style="left:161.20px;top:429.90px;width:53.00px;height:33.80px;background:#714B67;border-radius:4px;"></div>
<div class="t" style="top:440.15px;font-size:14.0px;font-weight:400;color:#fff;-webkit-text-stroke:0.45px #fff;left:-12.00px;width:400px;text-align:center;">Save</div>
<div class="b" style="left:219.00px;top:429.90px;width:66.00px;height:33.80px;background:#e7e9ed;border-radius:4px;"></div>
<div class="t" style="top:440.06px;font-size:14.1px;font-weight:400;color:#1f2937;-webkit-text-stroke:0.45px #1f2937;left:52.10px;width:400px;text-align:center;">Cancel</div>
</div>
</body></html>
